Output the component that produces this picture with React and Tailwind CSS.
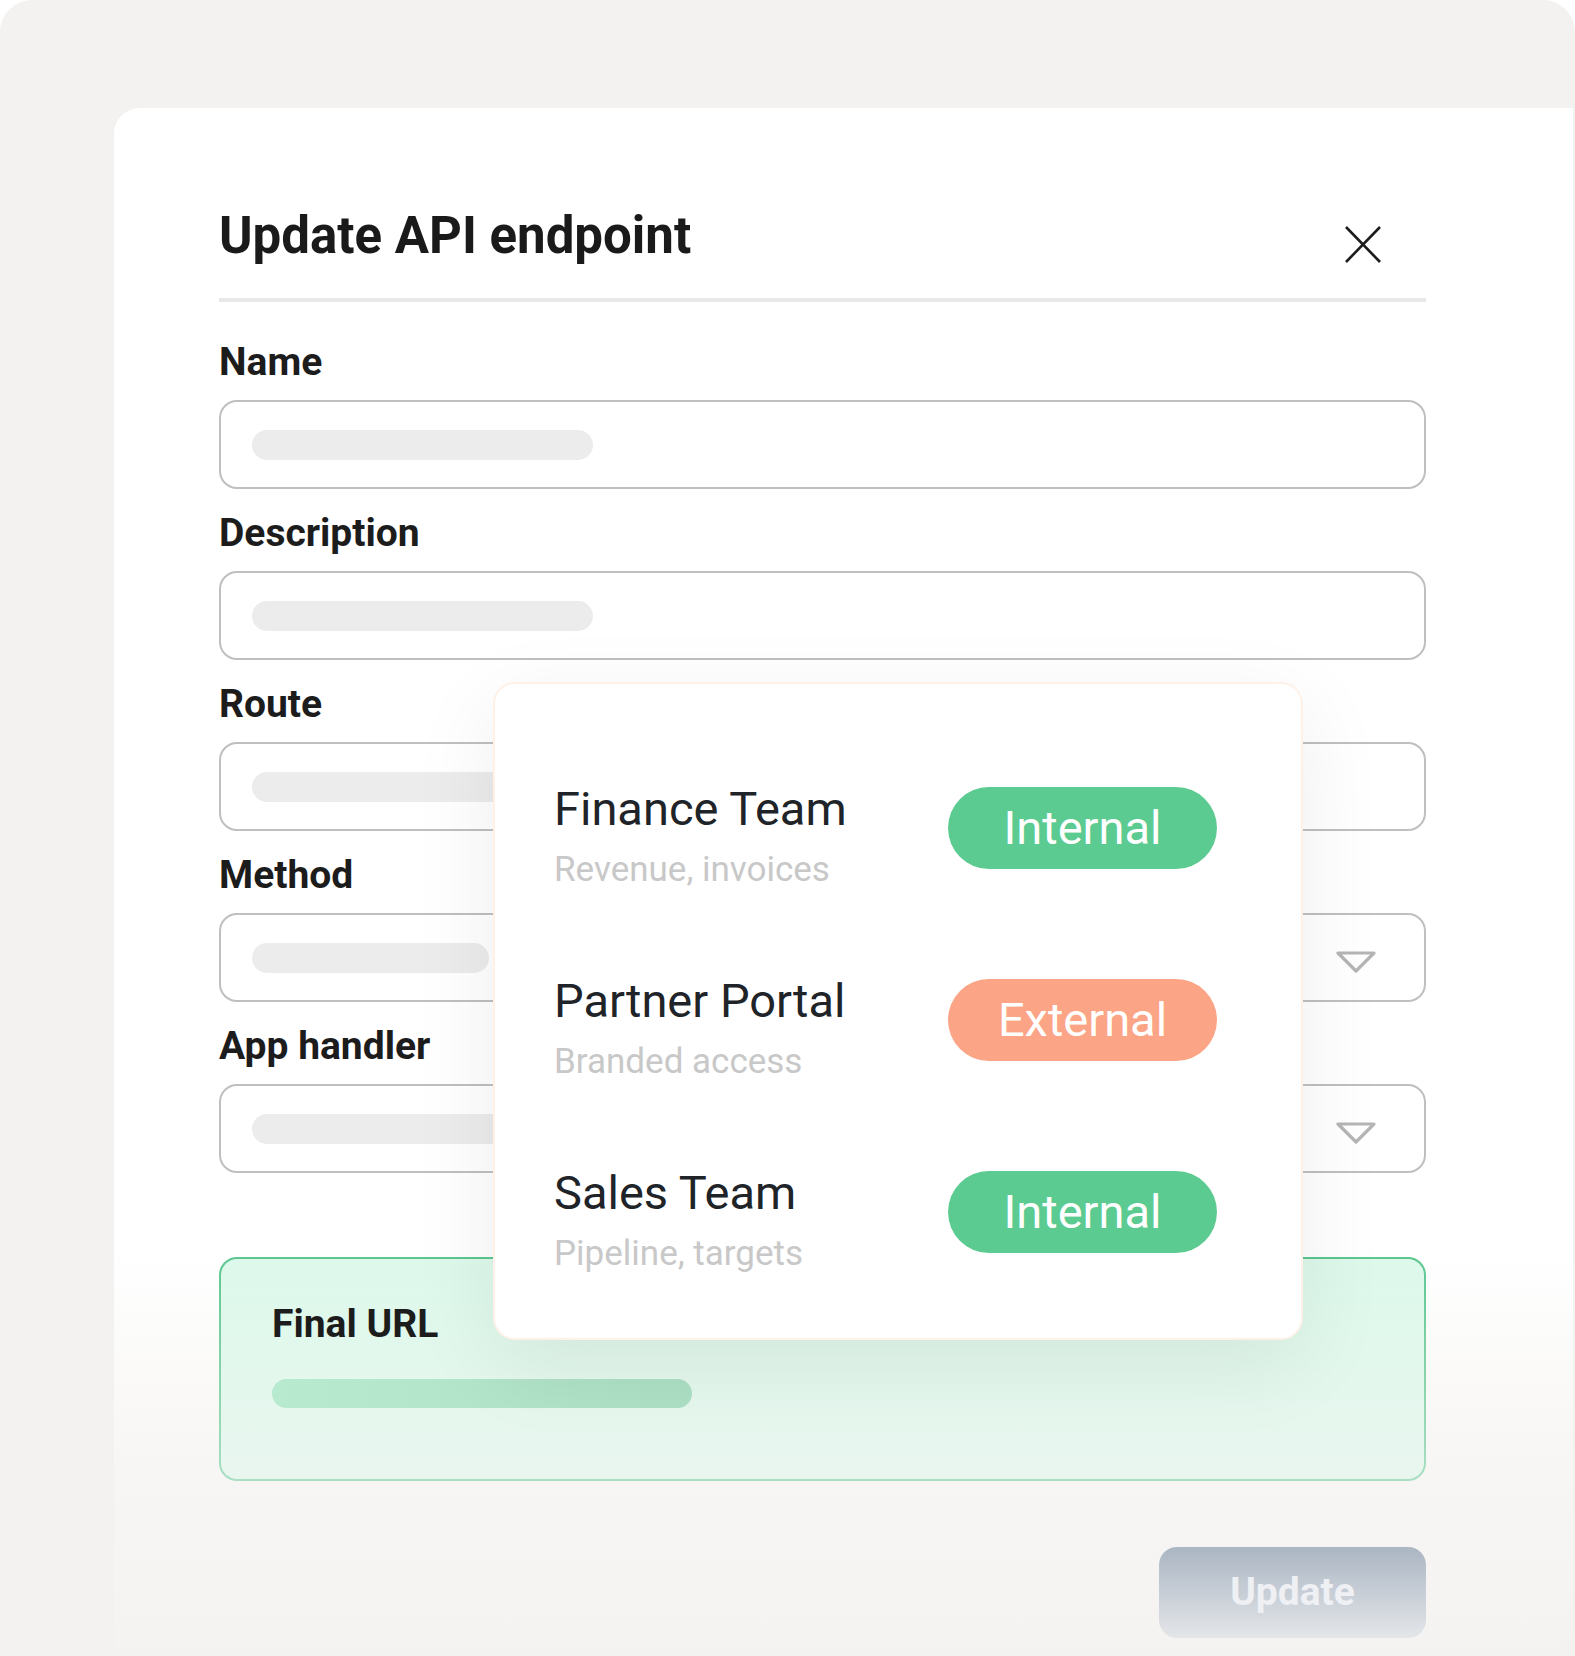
import React from 'react'

const fields = [
  { label: 'Name', bar: 'w-[341px]' },
  { label: 'Description', bar: 'w-[341px]' },
  { label: 'Route', bar: 'w-[341px]' },
  { label: 'Method', bar: 'w-[237px]', select: true },
  { label: 'App handler', bar: 'w-[341px]', select: true },
]

const teams = [
  { name: 'Finance Team', note: 'Revenue, invoices', tag: 'Internal' },
  { name: 'Partner Portal', note: 'Branded access', tag: 'External' },
  { name: 'Sales Team', note: 'Pipeline, targets', tag: 'Internal' },
]

function CloseIcon() {
  return (
    <svg width="36" height="37" viewBox="0 0 36 37" fill="none">
      <path d="M1 1 L35 36 M35 1 L1 36" stroke="#1c1c1c" strokeWidth="2.6" />
    </svg>
  )
}

function Caret() {
  return (
    <svg width="40" height="22" viewBox="0 0 40 22" fill="none">
      <path d="M2 2 H38 L20 20 Z" stroke="#b5b5b5" strokeWidth="3.2" strokeLinejoin="round" />
    </svg>
  )
}

export default function App() {
  return (
    <div className="h-[1656px] w-[1575px] overflow-hidden bg-white font-['Roboto',sans-serif]">
      <div className="h-full rounded-t-[32px] bg-[#f3f2f0] pt-[108px] pl-[114px] pr-[2px]">
        <div className="relative flex h-[1542px] flex-col rounded-tl-[26px] rounded-br-[26px] bg-[linear-gradient(to_bottom,#ffffff_0%,#ffffff_74%,#f7f6f4_88%,#f4f3f1_100%)] pt-[97px] pl-[105px] pr-[147px]">
          <div className="flex items-start justify-between">
            <h1 className="text-[51px] leading-[61px] font-bold text-[#1a1a1a]">Update API endpoint</h1>
            <button className="mt-[21px] mr-[45px]">
              <CloseIcon />
            </button>
          </div>
          <div className="mt-[32px] h-[4px] bg-[#e8e8e8]" />

          <div className="mt-[38px] flex flex-col gap-[22px]">
            {fields.map((f) => (
              <div key={f.label}>
                <p className="text-[39px] leading-[45px] font-bold text-[#1c1c1c]">{f.label}</p>
                <div className="mt-[15px] flex h-[89px] items-center justify-between rounded-[18px] border-2 border-[#bfbfbf] pl-[31px] pr-[48px]">
                  <div className={`h-[30px] rounded-full bg-[#ececec] ${f.bar}`} />
                  {f.select && (
                    <div className="mt-[8px]">
                      <Caret />
                    </div>
                  )}
                </div>
              </div>
            ))}
          </div>

          <div className="mt-[84px] h-[224px] rounded-[18px] bg-linear-to-b from-[#5cc690] to-[#a9dfc3] p-[2px]">
            <div className="h-full rounded-[16px] bg-linear-to-b from-[#ddf9eb] to-[#e9f6ef] pt-[43px] pl-[51px]">
              <p className="text-[39px] leading-[45px] font-bold text-[#1c1c1c]">Final URL</p>
              <div className="mt-[32px] h-[29px] w-[420px] rounded-full bg-linear-to-r from-[#b8eacf] to-[#acdfc4]" />
            </div>
          </div>

          <button className="mt-[66px] h-[91px] w-[267px] self-end rounded-[18px] bg-linear-to-b from-[#abb6c3] to-[#e4e6e9] text-[39px] font-bold text-[#eef0f4]">
            Update
          </button>

          <div className="absolute top-[574px] left-[379px] w-[810px] rounded-[22px] border-2 border-[#fdf1e8] bg-white pt-[98px] pb-[62px] pl-[59px] pr-[84px] shadow-[0_24px_90px_rgba(0,0,0,0.07)]">
            <div className="flex flex-col gap-[82px]">
              {teams.map((t) => (
                <div key={t.name} className="flex items-start justify-between">
                  <div>
                    <p className="text-[47px] leading-[54px] text-[#202428]">{t.name}</p>
                    <p className="mt-[12px] text-[35px] leading-[44px] text-[#c8c8c8]">{t.note}</p>
                  </div>
                  <div
                    className={`mt-[5px] flex h-[82px] w-[269px] items-center justify-center rounded-full text-[47px] text-white ${
                      t.tag === 'Internal' ? 'bg-[#5ccb91]' : 'bg-[#fca486]'
                    }`}
                  >
                    {t.tag}
                  </div>
                </div>
              ))}
            </div>
          </div>
        </div>
      </div>
    </div>
  )
}
